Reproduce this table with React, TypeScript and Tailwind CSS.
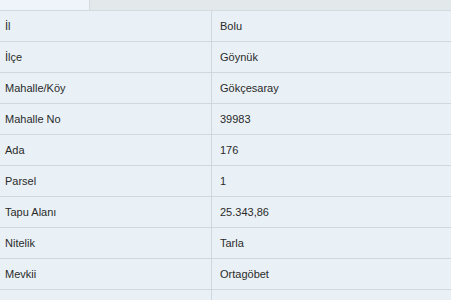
import React from 'react';

const rows: [string, string][] = [
  ['İl', 'Bolu'],
  ['İlçe', 'Göynük'],
  ['Mahalle/Köy', 'Gökçesaray'],
  ['Mahalle No', '39983'],
  ['Ada', '176'],
  ['Parsel', '1'],
  ['Tapu Alanı', '25.343,86'],
  ['Nitelik', 'Tarla'],
  ['Mevkii', 'Ortagöbet'],
  ['', ''],
];

export default function App() {
  return (
    <div className="w-[451px] h-[300px] overflow-hidden bg-[#e9f1f6] text-[11px] text-[#2a2a2a] font-['Liberation_Sans',Arial,sans-serif]">
      {/* tab strip */}
      <div className="flex h-[11px] border-b border-[#d3dbe1]">
        <div className="w-[90px] bg-[#eef4f9] border-r border-[#d3dbe1]" />
        <div className="flex-1 bg-[#e3e9eb]" />
      </div>

      {rows.map(([label, value], i) => (
        <div key={i} className="flex h-[31px] border-b border-[#cfd8df]">
          <div className="w-[212px] shrink-0 flex items-center pl-[5px] border-r border-[#cfd8df]">
            {label}
          </div>
          <div className="flex-1 flex items-center pl-[8px]">{value}</div>
        </div>
      ))}
    </div>
  );
}
